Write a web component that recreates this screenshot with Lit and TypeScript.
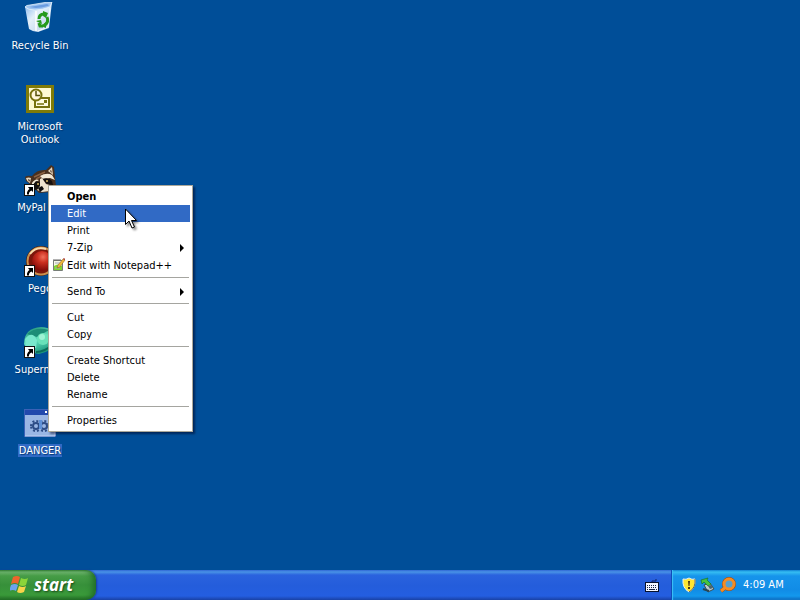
import { LitElement, html, css, svg, nothing } from "lit";
import { customElement } from "lit/decorators.js";
import { classMap } from "lit/directives/class-map.js";

const shortcutArrow = svg`
  <rect x="0.5" y="20.5" width="10" height="11" fill="#fff" stroke="#111"/>
  <path d="M4 23h5v5l-1.500-1.500q-3 1.500-2.500 4h-2q-.5-3.500 2.500-5.500z" fill="#000"/>`;

const recycleBin = svg`
  <defs><linearGradient id="bin" x2="1" y2="1"><stop stop-color="#7fb0ea"/><stop offset=".4" stop-color="#e4f0fa"/><stop offset="1" stop-color="#b4cdea"/></linearGradient></defs>
  <path d="M1 5 5 27q4 3 9 3l11-4 3-26-18 4z" fill="url(#bin)"/>
  <path d="M1 5q1-2 5-2L24 0h4l-2 5q-8 3-15 3-7 0-10-3z" fill="#9fc4f0" stroke="#e6f3fb" stroke-width=".8"/>
  <path d="M5 5 23 2l2 1-1 1q-7 2-12 2z" fill="#6a9ce0"/>
  <path d="M12 9v20" stroke="#fff" stroke-width="1.500" fill="none"/>
  <path d="M26 6 24 25 14 29" stroke="#f4faff" fill="none"/>
  <g fill="none" stroke="#259a1c" stroke-width="3"><path d="M15 17q0-5 5-5"/><path d="M23 15q2 5-2 8"/><path d="M19 24h-3l-1-3"/></g>
  <path d="m19 9 5 2-2 5-3-2zM22 20v6l-5-2zM12 19l5-1 1 4z" fill="#259a1c"/>`;

const outlook = svg`
  <rect x="2" y="2" width="28" height="28" fill="#807b08"/>
  <rect x="5" y="5" width="22" height="22" fill="#fdf9d2"/>
  <rect x="11" y="15" width="14" height="9" fill="#fffbe0" stroke="#77720e" stroke-width="2"/>
  <path d="M13 21h7" stroke="#77720e" stroke-width="1.5"/>
  <rect x="20" y="17" width="3" height="3" fill="#77720e"/>
  <circle cx="12" cy="12" r="5.5" fill="#fff8dc" stroke="#77720e" stroke-width="2"/>
  <path d="M12 8v4.500h4" stroke="#55500a" stroke-width="1.5" fill="none"/>`;

const raccoon = svg`
  <path d="M1 13q2-2 7-1Q13 5 22 6L27 1l3 2 1 10 1 9-5 6-12 1-8-8-5-4z" fill="#49301f"/>
  <path d="M2 14q3-1 5 0l-1 5q-3-1-4-5zM24 7l4-4 1 8z" fill="#e6d6bd"/>
  <path d="m4 15 2 1-1 2zM26 7l1-1 1 3z" fill="#3a241b"/>
  <path d="m10 13 11-5M12 15l8-4" stroke="#8a6142" stroke-width="1.500"/>
  <path d="M8 19q3-5 7-3l-3 2-4 4zM16 12q7-4 12-1l3 5-5-2-7 1z" fill="#f3e8d5"/>
  <path d="m8 22 4-5 5 2-1 5-5 2zM18 15q7-2 10 2l1 4-6-1z" fill="#17110f"/>
  <path d="m16 15 2-1 4 6 7 2-3 5-8 1-5-2 3-4z" fill="#f0e3cd"/>
  <path d="m14 24 4-2 2 3-4 3z" fill="#0e0b0a"/>
  <circle cx="14" cy="20" r="1" fill="#d9b765"/><circle cx="23" cy="17" r="1" fill="#d9b765"/>
  ${shortcutArrow}`;

const redOrb = svg`
  <defs><radialGradient id="orb" cx=".55" cy=".3" r=".7"><stop stop-color="#f0705a"/><stop offset=".4" stop-color="#cb2f1f"/><stop offset="1" stop-color="#7c0908"/></radialGradient></defs>
  <circle cx="17" cy="16" r="15" fill="#3f160a"/>
  <circle cx="17" cy="16" r="13.500" fill="#7c160b" stroke="#c98f4d" stroke-width="2"/>
  <path d="M6 9Q12 1 22 4" fill="none" stroke="#f8dcab" stroke-width="2"/>
  <circle cx="18" cy="16" r="10" fill="url(#orb)"/>
  ${shortcutArrow}`;

const greenOrb = svg`
  <defs><linearGradient id="teal" x2=".5" y2="1"><stop stop-color="#16866c"/><stop offset=".55" stop-color="#62e0bd"/><stop offset="1" stop-color="#19967b"/></linearGradient></defs>
  <path d="M0 18Q0 2 17 1q14 0 15 14-4 11-17 13Q3 27 0 18z" fill="url(#teal)"/>
  <path d="M3 8Q12 0 25 4L13 11z" fill="#1c8d76"/>
  <path d="M1 13q7-9 12 1l-1 8H2z" fill="#79e8cc"/>
  <circle cx="19" cy="13" r="6" fill="#69e2b9"/><circle cx="18" cy="11" r="3" fill="#9df3d4"/>
  <path d="M12 26q9 0 17-8" fill="none" stroke="#0b6d5b" stroke-width="2"/>
  ${shortcutArrow}`;

const batchFile = svg`
  <rect x=".5" y="2.500" width="31" height="27" fill="#9ab6e4" stroke="#3a61b7"/>
  <path d="M1 29h30V9" stroke="#c0d2f0" fill="none"/>
  <rect x="1" y="3" width="30" height="5" fill="#2249ad"/>
  <path d="M21 5h2m2 0h2m2 0h2" stroke="#fff" stroke-width="2"/>
  <g fill="none" stroke="#2d4c86" stroke-width="2"><circle cx="12" cy="19" r="3"/><circle cx="20" cy="19" r="3"/><path stroke-dasharray="2 2" d="M7 19a5 5 0 0 1 10 0 5 5 0 0 1-10 0M15 19a5 5 0 0 1 10 0 5 5 0 0 1-10 0"/></g>
  <path d="M15 13h3v9h-3z" fill="#5e90d7"/>`;

const desktopItems = [
  { label: "Recycle Bin", icon: recycleBin },
  { label: "Microsoft Outlook", icon: outlook },
  { label: "MyPal 3D", icon: raccoon },
  { label: "Pego", icon: redOrb },
  { label: "Supermon", icon: greenOrb },
  { label: "DANGER", icon: batchFile, selected: true },
];

interface MenuEntry { label: string; bold?: boolean; hot?: boolean; sub?: boolean; icon?: boolean }

const menuGroups: MenuEntry[][] = [
  [
    { label: "Open", bold: true },
    { label: "Edit", hot: true },
    { label: "Print" },
    { label: "7-Zip", sub: true },
    { label: "Edit with Notepad++", icon: true },
  ],
  [{ label: "Send To", sub: true }],
  [{ label: "Cut" }, { label: "Copy" }],
  [{ label: "Create Shortcut" }, { label: "Delete" }, { label: "Rename" }],
  [{ label: "Properties" }],
];

@customElement("xp-menu")
export class XpMenu extends LitElement {
  static styles = css`
    :host { display: block; }
    .menu {
      box-sizing: border-box;
      width: 145px;
      padding: 2px;
      background: #fff;
      border: 1px solid #aca899;
      box-shadow: 2px 2px 2px rgba(0, 0, 30, 0.5);
    }
    .group + .group::before {
      content: "";
      display: block;
      height: 1px;
      margin: 3px 1px 5px;
      background: #a5a5a0;
    }
    .item {
      display: grid;
      grid-template-columns: 16px 1fr 11px;
      align-items: center;
      width: 100%;
      height: 17px;
      padding: 0;
      border: 0;
      background: none;
      color: #000;
      font: 11px/17px "DejaVu Sans Condensed", "DejaVu Sans", sans-serif;
      text-align: left;
      white-space: nowrap;
    }
    .item.bold { font-weight: bold; }
    .item.hot { background: #316ac5; color: #fff; }
    .item.tall { height: 18px; }
    svg { display: block; }
  `;

  render() {
    return html`<div class="menu" role="menu">
      ${menuGroups.map((group) => html`<div class="group" role="group">
        ${group.map((e) => html`<button role="menuitem" class=${classMap({ item: true, bold: !!e.bold, hot: !!e.hot, tall: !!e.icon })}>
          <span>${e.icon ? html`<svg width="15" height="16" viewBox="0 0 15 16" aria-hidden="true">
            <path d="M2.500 3.500h9v10h-9z" fill="#f5f7e5" stroke="#777e77"/>
            <path d="M3 9q4-3 8 0v4H3z" fill="#80d72d"/>
            <path d="M4 6h6M4 11h5" stroke="#a5acbc"/>
            <path d="M3 2v2m2-2v2m2-2v2m2-2v2" stroke="#666"/>
            <path d="m6 11 1-3 5-6 2 1-5 7z" fill="#efb839" stroke="#8a5d1b" stroke-width=".5"/>
            <path d="m12 2 1-1 1 1v1z" fill="#a32020"/>
          </svg>` : nothing}</span>
          <span>${e.label}</span>
          ${e.sub ? html`<svg width="6" height="8" viewBox="0 0 6 8" aria-hidden="true"><path d="M1 0v8l4-4z" fill="#000"/></svg>` : nothing}
        </button>`)}
      </div>`)}
    </div>`;
  }
}

@customElement("xp-taskbar")
export class XpTaskbar extends LitElement {
  static styles = css`
    :host {
      display: flex;
      height: 30px;
      background: linear-gradient(#3168d5 0, #4993e6 2px, #2a62de 5px, #245ddb 16px, #245ee0 26px, #1941a5 30px);
    }
    .start {
      display: flex;
      align-items: center;
      gap: 4px;
      box-sizing: border-box;
      width: 96px;
      padding: 0 0 0 10px;
      border: 0;
      border-radius: 0 10px 10px 0;
      background: linear-gradient(#388238 0, #6fb56f 2px, #469c46 6px, #37903a 15px, #3a9a3a 25px, #226c25 30px);
      box-shadow: inset -5px 0 6px -2px #1f6a26, 1px 0 2px #163d9a;
      color: #fff;
      font: italic bold 17px/24px "Open Sans", "Noto Sans", sans-serif;
      text-shadow: 1px 1px 2px #184b18;
    }
    .space { flex: 1; }
    .keyboard { display: flex; align-items: center; width: 26px; padding: 0; border: 0; background: none; }
    .tray {
      display: flex;
      align-items: center;
      box-sizing: border-box;
      width: 129px;
      gap: 3px;
      padding-left: 9px;
      border-left: 1px solid #104db8;
      background: linear-gradient(#0c78d0 0, #36bef2 2px, #1694eb 6px, #118ce6 20px, #1398ed 26px, #0c68bd 30px);
      box-shadow: inset 1px 0 1px #3dc4f7;
      color: #fff;
      font: 11px/16px "DejaVu Sans Condensed", "DejaVu Sans", sans-serif;
    }
    .clock { margin-left: 4px; white-space: nowrap; }
    svg { display: block; }
  `;

  render() {
    return html`
      <button class="start">
        <svg width="20" height="18" viewBox="0 0 20 18" aria-hidden="true">
          <path d="M3 1q4-2 7 0L8 8q-3-2-7 0z" fill="#ed652c"/>
          <path d="m11 2q4 2 7 0l-2 7q-3 2-7 0z" fill="#8bd43a"/>
          <path d="M1 9q4-2 7 0l-2 6q-3-2-7 0z" fill="#6ba3ed"/>
          <path d="m9 10q4 2 7 0l-2 6q-4 2-7 0z" fill="#f8d34a"/>
        </svg>
        <span>start</span>
      </button>
      <div class="space"></div>
      <button class="keyboard" aria-label="Keyboard">
        <svg width="14" height="14" viewBox="0 0 14 14">
          <path d="M7 5V3h4V1" fill="none" stroke="#122465"/>
          <rect x=".5" y="4.500" width="13" height="9" fill="#f3f5ff" stroke="#07122e"/>
          <path d="M2 7.500h10M2 9.500h10" stroke="#182444" stroke-dasharray="1 1"/><path d="M2 11.500h1m1 0h6m1 0h1" stroke="#182444"/>
        </svg>
      </button>
      <div class="tray">
        <svg width="16" height="16" viewBox="0 0 16 16" aria-hidden="true">
          <path d="M8 1q3 2 6 1 1 9-6 13Q1 11 2 2q3 1 6-1z" fill="#ffe632" stroke="#e7edf0"/>
          <path d="M14 2q1 9-6 13" fill="none" stroke="#66654b"/>
          <path d="M7 4h2l-.5 5h-1zM7 10h2v2H7z" fill="#4d3510"/>
        </svg>
        <svg width="16" height="16" viewBox="0 0 16 16" aria-hidden="true">
          <path d="m4 8 6-2 4 6-6 3z" fill="#bdc9ca" stroke="#3a4e55"/>
          <path d="m8 9 3-1 2 3-3 1z" fill="#496570"/>
          <path d="m1 3 7-2-1 2 4 4-3 2-4-4-2 2z" fill="#45c43d" stroke="#18732d" stroke-width=".7"/>
          <path d="m3 12 6 2" stroke="#274552" stroke-width="2"/>
        </svg>
        <svg width="17" height="16" viewBox="0 0 17 16" aria-hidden="true">
          <path d="m7 10-5 4" stroke="#a04a10" stroke-width="4"/>
          <circle cx="10" cy="7" r="5" fill="none" stroke="#a04a10" stroke-width="4"/>
          <path d="m7 10-5 4" stroke="#f58c22" stroke-width="3"/>
          <circle cx="10" cy="7" r="5" fill="#56a0ce" stroke="#f58c22" stroke-width="3"/>
        </svg>
        <span class="clock">4:09 AM</span>
      </div>`;
  }
}

@customElement("app-root")
export class AppRoot extends LitElement {
  static styles = css`
    :host {
      display: flex;
      flex-direction: column;
      min-height: 100vh;
      background: #004e98;
    }
    .desktop {
      position: relative;
      flex: 1;
    }
    .icons {
      display: grid;
      grid-template-columns: 80px;
      grid-auto-rows: 81px;
    }
    .icon {
      display: flex;
      flex-direction: column;
      align-items: center;
      gap: 5px;
      padding: 2px 10px 0;
      border: 0;
      background: none;
      color: #fff;
      font: 11px/13px "DejaVu Sans Condensed", "DejaVu Sans", sans-serif;
    }
    .icon svg { display: block; flex: none; }
    .label { padding: 0 1px; text-shadow: 1px 1px 1px #003570; }
    .label.selected { background: #316ac5; }
    .context { position: absolute; left: 48px; top: 185px; }
    .pointer { position: absolute; left: 125px; top: 208px; pointer-events: none; filter: drop-shadow(2px 2px 1px rgba(0, 0, 0, 0.45)); }
  `;

  render() {
    return html`
      <main class="desktop">
        <div class="icons">
          ${desktopItems.map((d) => html`<button class="icon">
            <svg width="32" height="32" viewBox="0 0 32 32" aria-hidden="true">${d.icon}</svg>
            <span class=${classMap({ label: true, selected: !!d.selected })}>${d.label}</span>
          </button>`)}
        </div>
        <xp-menu class="context"></xp-menu>
        <svg class="pointer" width="13" height="21" viewBox="0 0 13 21" aria-hidden="true">
          <path d="M.5 1v15.500l3.500-3.500 3 7 2.500-1-3-6.500h5z" fill="#fff" stroke="#000"/>
        </svg>
      </main>
      <xp-taskbar></xp-taskbar>`;
  }
}
